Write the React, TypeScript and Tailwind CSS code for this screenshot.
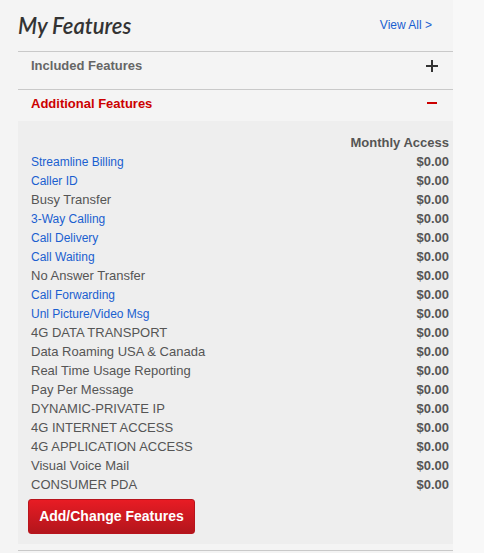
const features: { name: string; link: boolean }[] = [
  { name: "Streamline Billing", link: true },
  { name: "Caller ID", link: true },
  { name: "Busy Transfer", link: false },
  { name: "3-Way Calling", link: true },
  { name: "Call Delivery", link: true },
  { name: "Call Waiting", link: true },
  { name: "No Answer Transfer", link: false },
  { name: "Call Forwarding", link: true },
  { name: "Unl Picture/Video Msg", link: true },
  { name: "4G DATA TRANSPORT", link: false },
  { name: "Data Roaming USA & Canada", link: false },
  { name: "Real Time Usage Reporting", link: false },
  { name: "Pay Per Message", link: false },
  { name: "DYNAMIC-PRIVATE IP", link: false },
  { name: "4G INTERNET ACCESS", link: false },
  { name: "4G APPLICATION ACCESS", link: false },
  { name: "Visual Voice Mail", link: false },
  { name: "CONSUMER PDA", link: false },
];

export default function App() {
  return (
    <div className="flex min-h-[553px] w-[484px] bg-[#f8f8f8] font-['Liberation_Sans',Arial,sans-serif]">
      <div className="w-[453px] bg-[#f4f4f4] pl-[18px]">
        <div className="flex h-[51px] items-center justify-between">
          <h1 className="font-['Lato',sans-serif] text-[22px] font-semibold italic leading-none text-[#333]">
            My Features
          </h1>
          <a className="mr-[21px] mt-[-2px] text-[12px] text-[#1a5fd0]">View All &gt;</a>
        </div>

        <div className="h-px bg-[#c9c9c9]" />
        <div className="flex h-[37px] items-start justify-between pl-[13px] pr-[15px] pt-[6px]">
          <span className="text-[13px] font-bold leading-[16px] text-[#666]">Included Features</span>
          <svg width="12" height="12" viewBox="0 0 12 12" className="mt-[2px]">
            <path d="M6 0v12M0 6h12" stroke="#333" strokeWidth="2" />
          </svg>
        </div>

        <div className="h-px bg-[#c9c9c9]" />
        <div className="flex h-[31px] items-start justify-between pl-[13px] pr-[15px] pt-[6px]">
          <span className="text-[13px] font-bold leading-[16px] text-[#c00]">Additional Features</span>
          <svg width="12" height="12" viewBox="0 0 12 12" className="mt-[1px]">
            <path d="M1 6h10" stroke="#c00" strokeWidth="2" />
          </svg>
        </div>

        <div className="bg-[#eeeeee] pb-[10px] pt-[12px]">
          <div className="pl-[13px] pr-[4px] text-[13px] leading-[19px] text-[#555]">
            <div className="text-right font-bold">Monthly Access</div>
            {features.map((f) => (
              <div key={f.name} className="flex h-[19px] items-baseline justify-between">
                <span className={f.link ? "text-[12px] text-[#1a5fd0]" : ""}>{f.name}</span>
                <span className="font-bold">$0.00</span>
              </div>
            ))}
          </div>
          <button className="ml-[10px] mt-[5px] h-[35px] w-[167px] rounded-[3px] border border-[#b8141c] bg-gradient-to-b from-[#e81c24] to-[#b3151c] text-[14px] font-bold text-white">
            Add/Change Features
          </button>
        </div>

        <div className="mt-[6px] h-px bg-[#c9c9c9]" />
      </div>
      <div className="flex-1" />
    </div>
  );
}
